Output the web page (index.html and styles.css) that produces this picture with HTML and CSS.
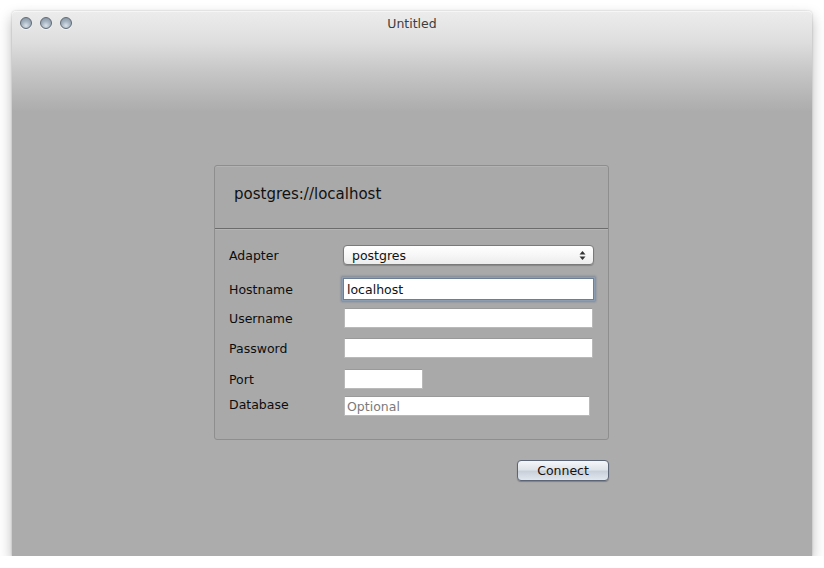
FILE: index.html
```html
<!DOCTYPE html>
<html>
<head>
<meta charset="utf-8">
<link rel="stylesheet" href="styles.css">
</head>
<body>
<div class="window">
  <div class="titlebar">
    <div class="lights">
      <span class="light"></span><span class="light"></span><span class="light"></span>
    </div>
    <div class="title">Untitled</div>
  </div>
  <div class="content">
    <div class="panel">
      <div class="panel-head">postgres://localhost</div>
      <div class="form">
        <div class="row row-adapter">
          <label class="lbl">Adapter</label>
          <div class="select"><span>postgres</span>
            <svg class="arrows" width="7" height="11" viewBox="0 0 7 11"><path d="M3.5 1 L6.5 4.5 L0.5 4.5 Z" fill="#333"/><path d="M3.5 10 L6.5 6.5 L0.5 6.5 Z" fill="#333"/></svg>
          </div>
        </div>
        <div class="row row-host">
          <label class="lbl">Hostname</label>
          <div class="input focus">localhost</div>
        </div>
        <div class="row row-user">
          <label class="lbl">Username</label>
          <div class="input"></div>
        </div>
        <div class="row row-pass">
          <label class="lbl">Password</label>
          <div class="input"></div>
        </div>
        <div class="row row-port">
          <label class="lbl">Port</label>
          <div class="input port"></div>
        </div>
        <div class="row row-db">
          <label class="lbl lbl-db">Database</label>
          <div class="input db placeholder">Optional</div>
        </div>
      </div>
    </div>
    <div class="actions">
      <div class="button">Connect</div>
    </div>
  </div>
</div>
</body>
</html>
```
FILE: styles.css
```css
html, body {
  margin: 0;
  padding: 0;
  background: #ffffff;
}
body {
  padding: 11px 12px 0 12px;
  font-family: "DejaVu Sans", "Liberation Sans", sans-serif;
}
.window {
  width: 800px;
  height: 545px;
  border-radius: 4px 4px 0 0;
  background: linear-gradient(to bottom, #ececec 0px, #dedede 30px, #c6c6c6 60px, #b2b2b2 90px, #acacac 100px, #acacac 100%);
  box-shadow: 0 6px 14px rgba(0,0,0,0.28), 0 0 2px rgba(0,0,0,0.25);
  display: flex;
  flex-direction: column;
  box-sizing: border-box;
  border-top: 1px solid #f6f6f6;
}
.titlebar {
  height: 22px;
  display: flex;
  align-items: center;
  position: relative;
}
.lights {
  display: flex;
  gap: 8px;
  padding-left: 8px;
}
.light {
  width: 12px;
  height: 12px;
  border-radius: 50%;
  box-sizing: border-box;
  border: 1px solid #5f6a75;
  background: radial-gradient(circle at 50% 75%, #d9e2ea 0%, #a7b4c2 45%, #7e8c9b 100%);
  box-shadow: 0 1px 0 rgba(255,255,255,0.6);
}
.title {
  position: absolute;
  left: 0;
  right: 0;
  text-align: center;
  font-size: 12.5px;
  color: #3d3d3d;
  top: 4px;
}
.content {
  display: flex;
  flex-direction: column;
  align-items: center;
  padding-top: 131px;
  padding-right: 1px;
}
.panel {
  width: 395px;
  box-sizing: border-box;
  border: 1px solid #8e8e8e;
  border-radius: 3px;
  background: #a9a9a9;
  box-shadow: inset 0 1px 0 rgba(255,255,255,0.12);
}
.panel-head {
  height: 63px;
  box-sizing: border-box;
  padding: 19px 0 0 19px;
  font-size: 15px;
  color: #111;
  border-bottom: 1px solid #6c6c6c;
  box-shadow: 0 1px 0 rgba(255,255,255,0.15);
}
.form {
  padding: 16px 14px 23px 14px;
  display: flex;
  flex-direction: column;
}
.row {
  display: flex;
  align-items: center;
}
.lbl {
  width: 114px;
  font-size: 12.5px;
  color: #0d0d0d;
}
.select {
  width: 251px;
  height: 20px;
  box-sizing: border-box;
  border: 1px solid #7a7a7a;
  border-radius: 4px;
  background: linear-gradient(to bottom, #ffffff 0%, #f7f7f7 50%, #ececec 100%);
  box-shadow: 0 1px 1px rgba(0,0,0,0.2);
  display: flex;
  align-items: center;
  justify-content: space-between;
  padding: 0 7px 0 8px;
  font-size: 12.5px;
  color: #111;
}
.arrows {
  display: block;
}
.input {
  width: 249px;
  height: 20px;
  box-sizing: border-box;
  background: #ffffff;
  border: 1px solid #b9b9b9;
  border-top-color: #9a9a9a;
  margin-left: 1px;
  font-size: 12.5px;
  color: #111;
  padding: 1px 3px 0 2px;
  line-height: 17px;
}
.input.focus {
  width: 251px;
  height: 22px;
  margin-left: 0;
  border: 1px solid #6d7f96;
  box-shadow: 0 0 0 1px #8d9db1, 0 0 2px 2px rgba(80,100,130,0.45);
  padding: 2px 3px 0 3px;
}
.row-host { margin-top: 13px; }
.row-user { margin-top: 8px; }
.row-pass { margin-top: 10px; }
.row-port { margin-top: 11px; }
.row-db { margin-top: 7px; }
.input.port { width: 79px; }
.input.db { width: 246px; }
.placeholder { color: #7a7a7a; }
.lbl-db { position: relative; top: -2px; }
.actions {
  width: 395px;
  display: flex;
  justify-content: flex-end;
  margin-top: 20px;
}
.button {
  width: 92px;
  height: 21px;
  box-sizing: border-box;
  border: 1px solid #5b6576;
  border-radius: 4px;
  background: linear-gradient(to bottom, #f4f6f9 0%, #dfe4ea 45%, #c9d0da 55%, #e2e7ee 100%);
  box-shadow: 0 1px 1px rgba(0,0,0,0.25);
  text-align: center;
  font-size: 12.5px;
  color: #111;
  line-height: 19px;
}
```
